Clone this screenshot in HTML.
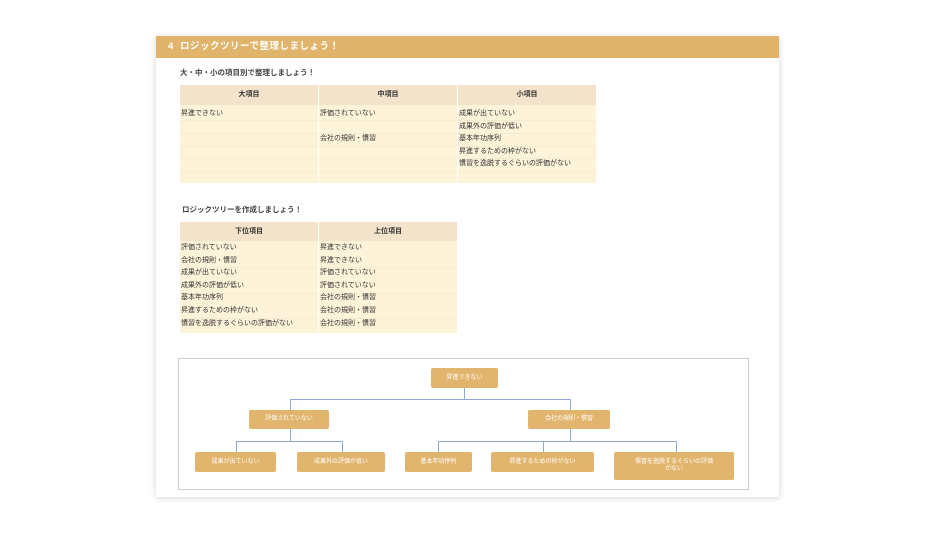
<!DOCTYPE html>
<html><head><meta charset="utf-8"><style>
*{margin:0;padding:0;box-sizing:border-box}
body{width:936px;height:543px;background:#fff;position:relative;overflow:hidden;font-family:"Liberation Sans","Noto Sans CJK JP",sans-serif;color:#333}
.card{position:absolute;left:156px;top:36px;width:623px;height:461px;background:#fff;box-shadow:0 1px 6px rgba(0,0,0,.18)}
.hd{position:absolute;left:156px;top:36px;width:623px;height:22px;background:#e1b46b;color:#fff;font-size:9.5px;font-weight:bold;line-height:22px;padding-left:12px;letter-spacing:.5px}
.t{position:absolute;font-size:7.5px;font-weight:bold;color:#444;white-space:nowrap}
.tb{position:absolute;background:#fdf3d9}
.th{position:absolute;background:#f4e3cb;font-size:7px;font-weight:bold;text-align:center;line-height:20px;color:#333}
.c{position:absolute;font-size:7px;color:#333;white-space:nowrap;line-height:12.6px}
.vl{position:absolute;width:1px;background:#fff}
.hl{position:absolute;height:1px;background:#f6ead0}
.tree{position:absolute;left:178px;top:358px;width:571px;height:132px;border:1px solid #c8ccd4}
.n{position:absolute;background:#e2b56e;border-radius:2px;color:#fff;font-size:6px;text-align:center;display:flex;align-items:center;justify-content:center;line-height:7px}
.l{position:absolute;background:#8fa9d6}
</style></head><body>
<div class="card"></div>
<div class="hd">4 &nbsp;ロジックツリーで整理しましょう！</div>
<div class="t" style="left:180px;top:67px">大・中・小の項目別で整理しましょう！</div>
<div class="tb" style="left:180px;top:85px;width:416px;height:98px"></div>
<div class="th" style="left:180px;top:85px;width:138px">大項目</div>
<div class="th" style="left:319px;top:85px;width:138px">中項目</div>
<div class="th" style="left:458px;top:85px;width:138px">小項目</div>
<div class="hl" style="left:180px;top:120px;width:416px"></div>
<div class="hl" style="left:180px;top:133px;width:416px"></div>
<div class="hl" style="left:180px;top:146px;width:416px"></div>
<div class="hl" style="left:180px;top:158px;width:416px"></div>
<div class="hl" style="left:180px;top:171px;width:416px"></div>
<div class="vl" style="left:318px;top:85px;height:98px"></div>
<div class="vl" style="left:457px;top:85px;height:98px"></div>
<div class="c" style="left:181px;top:108px">昇進できない</div>
<div class="c" style="left:320px;top:108px">評価されていない<br><br>会社の規則・慣習</div>
<div class="c" style="left:459px;top:108px">成果が出ていない<br>成果外の評価が低い<br>基本年功序列<br>昇進するための枠がない<br>慣習を逸脱するぐらいの評価がない</div>

<div class="t" style="left:182px;top:204px">ロジックツリーを作成しましょう！</div>
<div class="tb" style="left:180px;top:222px;width:277px;height:111px"></div>
<div class="th" style="left:180px;top:222px;width:138px;line-height:19px">下位項目</div>
<div class="th" style="left:319px;top:222px;width:138px;line-height:19px">上位項目</div>
<div class="hl" style="left:180px;top:267px;width:277px"></div>
<div class="hl" style="left:180px;top:293px;width:277px"></div>
<div class="hl" style="left:180px;top:318px;width:277px"></div>
<div class="vl" style="left:318px;top:222px;height:111px"></div>
<div class="c" style="left:181px;top:242px">評価されていない<br>会社の規則・慣習<br>成果が出ていない<br>成果外の評価が低い<br>基本年功序列<br>昇進するための枠がない<br>慣習を逸脱するぐらいの評価がない</div>
<div class="c" style="left:320px;top:242px">昇進できない<br>昇進できない<br>評価されていない<br>評価されていない<br>会社の規則・慣習<br>会社の規則・慣習<br>会社の規則・慣習</div>

<div class="tree"></div>
<div class="l" style="left:464px;top:388px;width:1px;height:11px"></div>
<div class="l" style="left:290px;top:399px;width:281px;height:1px"></div>
<div class="l" style="left:290px;top:399px;width:1px;height:11px"></div>
<div class="l" style="left:570px;top:399px;width:1px;height:11px"></div>
<div class="l" style="left:290px;top:429px;width:1px;height:12px"></div>
<div class="l" style="left:236px;top:441px;width:107px;height:1px"></div>
<div class="l" style="left:236px;top:441px;width:1px;height:11px"></div>
<div class="l" style="left:342px;top:441px;width:1px;height:11px"></div>
<div class="l" style="left:570px;top:429px;width:1px;height:12px"></div>
<div class="l" style="left:438px;top:441px;width:239px;height:1px"></div>
<div class="l" style="left:438px;top:441px;width:1px;height:11px"></div>
<div class="l" style="left:543px;top:441px;width:1px;height:11px"></div>
<div class="l" style="left:676px;top:441px;width:1px;height:11px"></div>
<div class="n" style="left:431px;top:368px;width:67px;height:20px">昇進できない</div>
<div class="n" style="left:249px;top:410px;width:80px;height:19px">評価されていない</div>
<div class="n" style="left:528px;top:410px;width:82px;height:19px">会社の規則・慣習</div>
<div class="n" style="left:195px;top:452px;width:81px;height:20px">成果が出ていない</div>
<div class="n" style="left:297px;top:452px;width:88px;height:20px">成果外の評価が低い</div>
<div class="n" style="left:405px;top:452px;width:67px;height:20px">基本年功序列</div>
<div class="n" style="left:491px;top:452px;width:103px;height:20px">昇進するための枠がない</div>
<div class="n" style="left:614px;top:452px;width:120px;height:28px">慣習を逸脱するぐらいの評価<br>がない</div>
</body></html>
